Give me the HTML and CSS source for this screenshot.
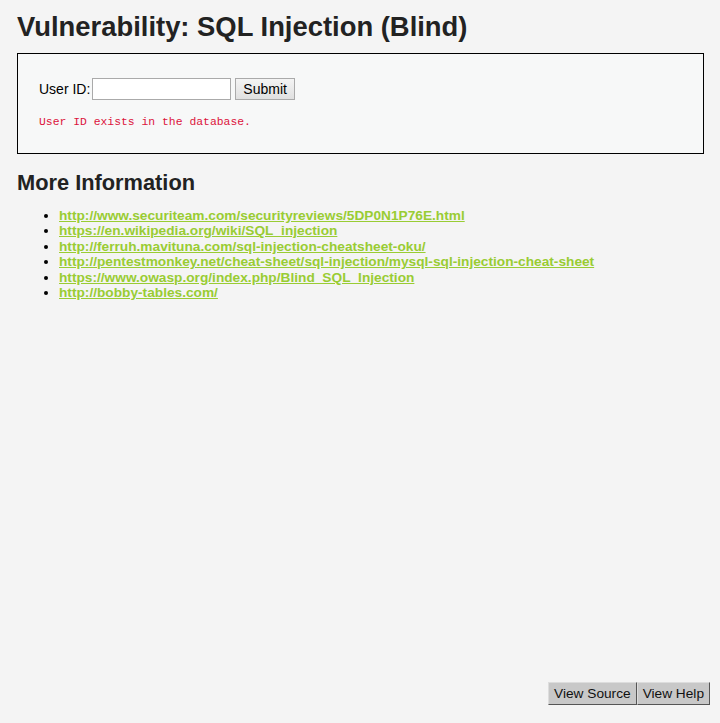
FILE: index.html
```html
<!DOCTYPE html>
<html>
<head>
<meta charset="utf-8">
<link rel="stylesheet" href="styles.css">
</head>
<body>
<div class="page">
  <h1 class="title">Vulnerability: SQL Injection (Blind)</h1>
  <div class="vulnerable-code">
    <form class="form">
      <label class="label">User ID:</label>
      <input class="text-input" type="text">
      <button class="submit" type="button">Submit</button>
    </form>
    <pre class="message">User ID exists in the database.</pre>
  </div>
  <h2 class="subtitle">More Information</h2>
  <ul class="links">
    <li><a href="#">http://www.securiteam.com/securityreviews/5DP0N1P76E.html</a></li>
    <li><a href="#">https://en.wikipedia.org/wiki/SQL_injection</a></li>
    <li><a href="#">http://ferruh.mavituna.com/sql-injection-cheatsheet-oku/</a></li>
    <li><a href="#">http://pentestmonkey.net/cheat-sheet/sql-injection/mysql-sql-injection-cheat-sheet</a></li>
    <li><a href="#">https://www.owasp.org/index.php/Blind_SQL_Injection</a></li>
    <li><a href="#">http://bobby-tables.com/</a></li>
  </ul>
  <div class="footer-buttons">
    <button class="popup-btn" type="button">View Source</button>
    <button class="popup-btn" type="button">View Help</button>
  </div>
</div>
</body>
</html>
```

FILE: styles.css
```css
html, body {
  margin: 0;
  padding: 0;
  background: #f4f4f4;
}
body {
  font-family: "Liberation Sans", Arial, sans-serif;
  font-size: 13px;
  color: #000;
}
.page {
  display: flex;
  flex-direction: column;
  min-height: 723px;
  box-sizing: border-box;
  padding: 11px 10px 18px 17px;
}
.title {
  margin: 0;
  font-size: 27.4px;
  font-weight: bold;
  color: #222;
  line-height: 32px;
}
.vulnerable-code {
  margin: 10px 6px 0 0;
  border: 1px solid #000;
  background: #f7f8f8;
  padding: 24px 21px 23px 21px;
}
.form {
  display: flex;
  align-items: center;
  margin: 0;
  font-size: 14px;
}
.label {
  margin-right: 2px;
}
.text-input {
  width: 135px;
  height: 18px;
  border: 1px solid #aaa;
  padding: 1px 1px;
  margin: 0 4px 0 0;
  background: #fff;
}
.submit {
  font-family: "Liberation Sans", Arial, sans-serif;
  font-size: 14px;
  height: 22px;
  padding: 0 7px;
  border: 1px solid #aaa;
  background: linear-gradient(#f4f4f4, #e0e0e0);
  color: #000;
}
.message {
  margin: 15px 0 0 0;
  font-family: "Liberation Mono", "DejaVu Sans Mono", monospace;
  font-size: 11.4px;
  color: #dc143c;
  line-height: 15px;
}
.subtitle {
  margin: 16px 0 0 0;
  font-size: 21.8px;
  font-weight: bold;
  color: #222;
  line-height: 26px;
}
.links {
  margin: 12px 0 0 0;
  padding-left: 42px;
  font-size: 13.7px;
  line-height: 15.4px;
}
.links a {
  color: #99cc33;
  font-weight: bold;
  text-decoration: underline;
}
.footer-buttons {
  margin-top: auto;
  display: flex;
  justify-content: flex-end;
  gap: 0;
}
.popup-btn {
  font-family: "Liberation Sans", Arial, sans-serif;
  font-size: 13.7px;
  height: 23px;
  padding: 0 5px;
  background: #c8c8c8;
  border: 1px solid #555;
  border-top-color: #ddd;
  border-left-color: #ddd;
  color: #111;
}
```
